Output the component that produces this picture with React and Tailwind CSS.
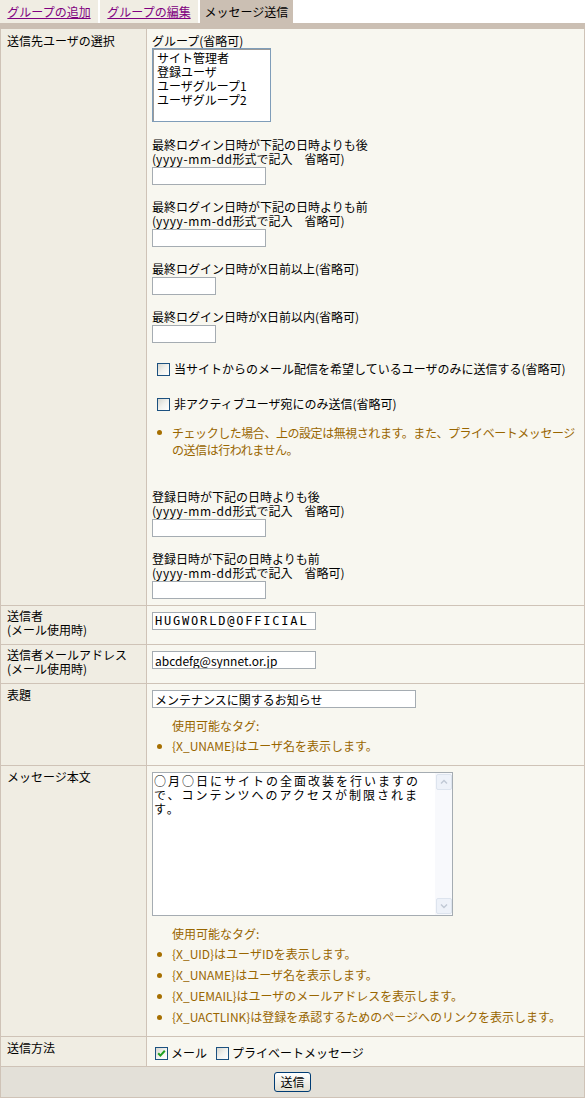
import React from 'react';

const GROUPS = ['サイト管理者', '登録ユーザ', 'ユーザグループ1', 'ユーザグループ2'];

const BODY_TAGS = [
  '{X_UID}はユーザIDを表示します。',
  '{X_UNAME}はユーザ名を表示します。',
  '{X_UEMAIL}はユーザのメールアドレスを表示します。',
  '{X_UACTLINK}は登録を承認するためのページへのリンクを表示します。',
];

const Checkbox = ({ checked }) => (
  <span className="inline-flex h-[13px] w-[13px] shrink-0 items-center justify-center border border-[#1c5180] bg-gradient-to-br from-[#d6d6cf] via-[#f2f2ee] to-white">
    {checked && (
      <svg width="11" height="11" viewBox="0 0 11 11">
        <path d="M2.2 5.2 L4.4 7.6 L8.8 2.8" stroke="#21a121" strokeWidth="2" fill="none" />
      </svg>
    )}
  </span>
);

const TextBox = ({ className, value = '' }) => (
  <input
    type="text"
    defaultValue={value}
    className={`block h-[18px] border border-[#a5acb2] bg-white px-[2px] text-[12px] leading-[14px] outline-none ${className}`}
  />
);

const Bullet = ({ children }) => (
  <li className="flex items-center whitespace-nowrap">
    <span className="ml-[5px] mr-[10px] h-[5px] w-[5px] shrink-0 rounded-full bg-[#a66f00]" />
    <span>{children}</span>
  </li>
);

const TagHelp = ({ items }) => (
  <div className="mt-[11px] text-[#996600]">
    <div className="pl-[20px]">使用可能なタグ:</div>
    <ul className="mt-[6px] flex flex-col gap-[7px]">
      {items.map((t) => (
        <Bullet key={t}>{t}</Bullet>
      ))}
    </ul>
  </div>
);

const Row = ({ label, labelPad, bodyPad, children }) => (
  <div className="flex border-b border-[#cfc3b7]">
    <div className={`w-[146px] shrink-0 border-r border-[#cfc3b7] bg-[#f0ede3] pl-[6px] ${labelPad}`}>{label}</div>
    <div className={`flex-1 bg-[#f8f7f0] pl-[5px] ${bodyPad}`}>{children}</div>
  </div>
);

// date field: two-line caption + input
const DateField = ({ title, className }) => (
  <div className={className}>
    <div>{title}</div>
    <div>
      (<span className="tracking-[0.6px]">yyyy-mm-dd</span>形式で記入　省略可)
    </div>
    <TextBox className="mt-[1px] w-[114px]" />
  </div>
);

const DaysField = ({ title, className }) => (
  <div className={className}>
    <div>{title}</div>
    <TextBox className="mt-[1px] w-[64px]" />
  </div>
);

const ScrollBtn = ({ up }) => (
  <div className="flex h-[16px] w-[16px] items-center justify-center rounded-[2px] border border-[#dde4ee] bg-[#eef2f9]">
    <svg width="8" height="6" viewBox="0 0 8 6">
      <path d={up ? 'M1 4.5 L4 1.5 L7 4.5' : 'M1 1.5 L4 4.5 L7 1.5'} stroke="#c0c8d4" strokeWidth="1.4" fill="none" />
    </svg>
  </div>
);

export default function App() {
  return (
    <div className="w-[585px] bg-white font-['Noto_Sans_CJK_JP',sans-serif] text-[12px] leading-[14px] text-black">
      {/* tabs */}
      <div className="flex h-[23px] gap-[2px]">
        <a href="#" className="flex w-[98px] items-center justify-center bg-[#f0ede3] text-[#800080] underline">
          グループの追加
        </a>
        <a href="#" className="flex w-[98px] items-center justify-center bg-[#f0ede3] text-[#800080] underline">
          グループの編集
        </a>
        <div className="flex w-[93px] items-center justify-center bg-[#cbbfb3]">メッセージ送信</div>
      </div>
      <div className="h-[6px] bg-[#cbbfb3]" />

      <div className="border-x border-b border-[#cfc3b7]">
        {/* recipients */}
        <Row label="送信先ユーザの選択" labelPad="pt-[5px]" bodyPad="pt-[5px] pb-[6px]">
          <div>グループ(省略可)</div>
          <div className="h-[74px] w-[119px] border border-[#7f9db9] bg-white pl-[4px] pt-[2px] shadow-[inset_1px_1px_0_#9a9a9a]">
            {GROUPS.map((g) => (
              <div key={g}>{g}</div>
            ))}
          </div>

          <DateField className="mt-[16px]" title="最終ログイン日時が下記の日時よりも後" />
          <DateField className="mt-[15px]" title="最終ログイン日時が下記の日時よりも前" />
          <DaysField className="mt-[15px]" title="最終ログイン日時がX日前以上(省略可)" />
          <DaysField className="mt-[15px]" title="最終ログイン日時がX日前以内(省略可)" />

          <label className="mt-[18px] flex h-[16px] items-center gap-[4px] pl-[5px] whitespace-nowrap">
            <Checkbox />
            当サイトからのメール配信を希望しているユーザのみに送信する(省略可)
          </label>
          <label className="mt-[19px] flex h-[16px] items-center gap-[4px] pl-[5px]">
            <Checkbox />
            非アクティブユーザ宛にのみ送信(省略可)
          </label>
          <div className="mt-[12px] flex text-[#996600] leading-[17px]">
            <span className="ml-[5px] mr-[10px] mt-[6px] h-[5px] w-[5px] shrink-0 rounded-full bg-[#a66f00]" />
            <div className="whitespace-nowrap tracking-[-0.45px]">
              チェックした場合、上の設定は無視されます。また、プライベートメッセージ
              <br />
              の送信は行われません。
            </div>
          </div>

          <DateField className="mt-[32px]" title="登録日時が下記の日時よりも後" />
          <DateField className="mt-[15px]" title="登録日時が下記の日時よりも前" />
        </Row>

        {/* sender */}
        <Row
          label={<>送信者<br />(メール使用時)</>}
          labelPad="pt-[3px] pb-[7px]"
          bodyPad="pt-[6px]"
        >
          <TextBox
            className="w-[164px] font-['DejaVu_Sans_Mono',monospace] tracking-[1.8px]"
            value="HUGWORLD@OFFICIAL"
          />
        </Row>

        <Row
          label={<>送信者メールアドレス<br />(メール使用時)</>}
          labelPad="pt-[3px] pb-[7px]"
          bodyPad="pt-[6px]"
        >
          <TextBox className="w-[164px]" value="abcdefg@synnet.or.jp" />
        </Row>

        {/* subject */}
        <Row label="表題" labelPad="pt-[4px]" bodyPad="pt-[6px] pb-[12px]">
          <TextBox className="w-[264px]" value="メンテナンスに関するお知らせ" />
          <TagHelp items={['{X_UNAME}はユーザ名を表示します。']} />
        </Row>

        {/* body */}
        <Row label="メッセージ本文" labelPad="pt-[4px]" bodyPad="pt-[6px] pb-[12px]">
          <div className="flex h-[144px] w-[301px] border border-[#a5acb2] bg-white">
            <div className="flex-1 pl-[1px] pt-[1px] tracking-[2px]">
              <div>○月○日にサイトの全面改装を行いますの</div>
              <div>で、コンテンツへのアクセスが制限されま</div>
              <div>す。</div>
            </div>
            <div className="flex w-[17px] flex-col justify-between bg-[#f8f9fc] p-px">
              <ScrollBtn up />
              <ScrollBtn />
            </div>
          </div>
          <TagHelp items={BODY_TAGS} />
        </Row>

        {/* method */}
        <Row label="送信方法" labelPad="pt-[4px] pb-[11px]" bodyPad="pt-[8px]">
          <div className="flex h-[16px] items-center pl-[3px]">
            <Checkbox checked />
            <span className="ml-[3px]">メール</span>
            <span className="ml-[9px]" />
            <Checkbox />
            <span className="ml-[3px]">プライベートメッセージ</span>
          </div>
        </Row>

        {/* submit */}
        <div className="flex justify-center bg-[#e3e0d8] py-[5px]">
          <button
            type="button"
            className="h-[20px] w-[37px] rounded-[3px] border border-[#003c74] bg-gradient-to-b from-white to-[#e2dfd2] text-[12px] leading-[14px]"
          >
            送信
          </button>
        </div>
      </div>
    </div>
  );
}
